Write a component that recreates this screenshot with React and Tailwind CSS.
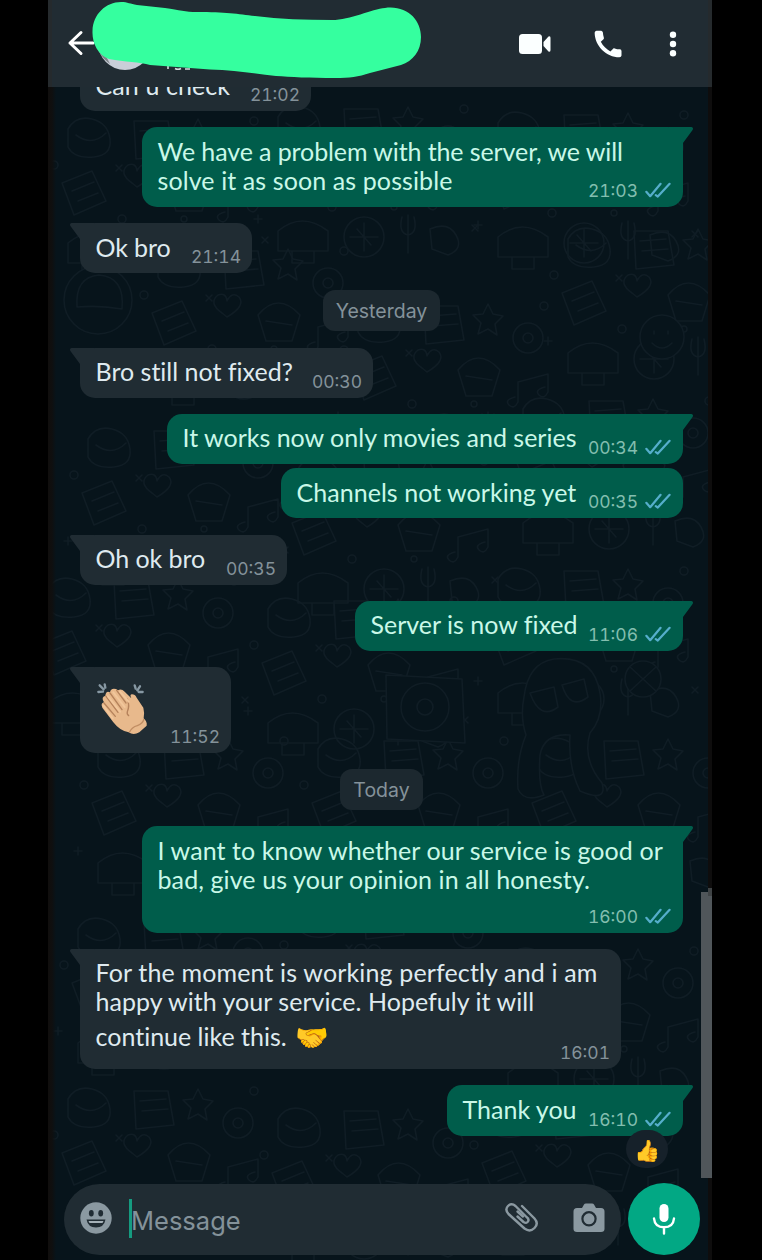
const RECEIVED = "bg-[#202c33] text-[#dfeaef]";
const SENT = "bg-[#005d4b] text-[#c9f8e8]";

function Ticks() {
  return (
    <svg className="relative -top-px ml-[7px] h-[17px] w-[26px]" viewBox="0 0 26 17" fill="none" stroke="#55aecb" strokeWidth="2.2" strokeLinecap="round" strokeLinejoin="round">
      <path d="M1.3 9.8 5.2 14.2 15.6 1.8" />
      <path d="M10.8 13.2 12.8 14.6 24.6 1.8" />
    </svg>
  );
}

function Tail({ sent }) {
  return sent ? (
    <svg className="absolute top-0 -right-[10px] h-[20px] w-[24px]" viewBox="0 0 24 20" fill="#005d4b">
      <path d="M0 0H22.5Q25 1 23.4 3.2L14 16V20H0Z" />
    </svg>
  ) : (
    <svg className="absolute top-0 -left-[10px] h-[20px] w-[24px]" viewBox="0 0 24 20" fill="#202c33">
      <path d="M24 0H1.5Q-1 1 .6 3.2L10 16V20H24Z" />
    </svg>
  );
}

function Bubble({ sent, tail = true, time, className, children }) {
  return (
    <div className={`relative grid shrink-0 rounded-[15px] ${sent ? `${SENT} self-end` : `${RECEIVED} self-start`} ${className}`}>
      {tail && <Tail sent={sent} />}
      <div className="relative col-start-1 row-start-1 pl-[15.5px] font-['Lato',sans-serif] text-[25px] leading-[29px] whitespace-nowrap [font-variant-ligatures:none]">
        {children}
      </div>
      <div className={`relative col-start-1 row-start-1 flex items-center self-end justify-self-end pb-[6px] font-['Inter',sans-serif] text-[17.5px] leading-[20px] tabular-nums ${sent ? "pr-[12px] text-[#83beaf]" : "pr-[11px] text-[#84929a]"}`}>
        {time}
        {sent && <Ticks />}
      </div>
    </div>
  );
}

function DayPill({ className, children }) {
  return (
    <div className={`flex h-[41px] shrink-0 items-center justify-center self-center rounded-[12px] bg-[#1c282f] pt-[3px] font-['Inter',sans-serif] text-[19.5px] text-[#84929a] ${className}`}>
      {children}
    </div>
  );
}

function ClapIcon() {
  return (
    <svg className="-ml-[6px] h-[65px] w-[70px]" viewBox="0 0 210 195">
      <g stroke="#8798a3" strokeWidth="7" strokeLinecap="round">
        <path d="M29 31 41 43M25 51 39 50M44 28 46 38M150 34 142 46M158 51 146 51M134 31 137 41" />
      </g>
      <path d="M84 46Q94 40 104 50L124 70Q118 58 126 58Q135 58 140 68L160 98Q164 112 161 130Q172 140 170 152L148 172Q130 182 116 172Q90 168 70 142L37 98Q31 85 42 82Q32 66 46 62Q48 46 60 52Q62 38 78 42Z" fill="#e8b98c" />
      <path d="M112 72Q120 92 112 110Q110 118 116 122M48 64 84 112M60 54 96 104M80 46 108 84M42 84 76 124" fill="none" stroke="#b5825b" strokeWidth="4" strokeLinecap="round" />
      <path d="M54 64 90 110M70 52 104 96M40 92 68 130M90 50 116 80" fill="none" stroke="#f1c69b" strokeWidth="6" strokeLinecap="round" />
      <path d="M118 172Q126 156 142 152Q158 146 162 132" fill="none" stroke="#c08d63" strokeWidth="4" />
    </svg>
  );
}

function Wallpaper() {
  const clusters = [
    [0, 20], [210, 8], [430, 14], [90, 150], [290, 205], [500, 130], [20, 330], [230, 360], [455, 300],
    [-20, 480], [200, 500], [430, 470], [30, 640], [250, 640], [470, 640], [10, 820], [230, 800], [440, 850], [0, 990], [210, 1010], [420, 1000],
  ];
  return (
    <svg className="absolute inset-0 h-[1173px] w-[664px]" viewBox="0 0 664 1173" fill="none" stroke="#101d25" strokeWidth="1.6" strokeLinecap="round" strokeLinejoin="round">
      <defs>
        <g id="doodles">
          <path d="M20 22q8-14 24-10t18 20-16 18q-20 2-26-10zM28 28q16 12 30-2" />
          <path d="M86 14h34l6 34-38 4zM92 24l26-2M94 34l26-2" />
          <path d="M150 12l5 10 10 2-8 8 2 11-9-6-10 5 3-11-8-8 10-1z" />
          <circle cx="190" cy="46" r="15" /><circle cx="190" cy="46" r="5" />
          <path d="M14 76l30-12 14 30-32 14zM24 84l22-9M30 94l20-8" />
          <path d="M84 76q-14-10-4-18 8-3 9 6 5-10 12-4 7 9-12 20z" />
          <path d="M120 78q20-24 42 0l-8 26h-26zM128 84l26 4" />
          <path d="M180 90l30-8v18q-4 8-9 3t6-8M180 90v20q-4 8-9 3t6-8" />
          <path d="M20 136q24-20 50 0v20H20zM34 156v12h22v-12" />
          <circle cx="106" cy="142" r="20" /><path d="M92 142h28M106 128v28M99 134l14 16" />
          <path d="M150 120v38M144 122q-4 16 6 18M156 122q4 16-6 18M172 134q18-8 26 6t-8 20l-16-6z" />
          <circle cx="74" cy="112" r="4" /><circle cx="6" cy="58" r="4" /><circle cx="136" cy="112" r="3" /><circle cx="206" cy="14" r="4" />
          <path d="M68 58l6 6M74 58l-6 6M214 130l6 6M220 130l-6 6M0 120v8M-4 124h8" />
        </g>
      </defs>
      {clusters.map(([x, y]) => (
        <use key={`${x}-${y}`} href="#doodles" x={x} y={y} />
      ))}
      <circle cx="50" cy="213" r="34" fill="#07141b" /><path d="M29 220q-2-30 22-32 26 2 23 34-22-4-45-2z" />
      <circle cx="614" cy="250" r="22" fill="#07141b" /><path d="M606 244v3M620 244v3M604 256q10 10 20 0" />
      <path d="M338 588l76 4 3 64-78-4z" fill="#07141b" /><circle cx="377" cy="620" r="24" /><circle cx="377" cy="620" r="8" />
      <path d="M476 610q4-34 30-38 40-4 46 34 4 24-10 40-8 26 12 50 6 20-22 8-12-24-10-56q-26-2-30 20 -2 30 4 40-20 8-26-6-2-30 8-54-6-18-2-38z" fill="#07141b" /><path d="M482 606l24-6 4 20q-18 14-28-14zM514 598l22-6 4 18q-18 14-26-12z" />
      <circle cx="595" cy="592" r="18" fill="#07141b" /><path d="M582 580l26 24M608 580l-26 24" />
    </svg>
  );
}

function Header() {
  return (
    <header className="relative z-10 flex h-[87px] shrink-0 items-center border-r-4 border-l-4 border-[#252a2d] bg-[#212c33]">
      <svg className="h-[87px] w-[377px] shrink-0" viewBox="52 0 377 87">
        <circle cx="125" cy="43" r="27" fill="#c9ced8" />
        <path d="M98 50q4 8 12 14l-4-8z" fill="#7e8488" />
        <path d="M168 62v7M175 68.500q3 1.500 6 0M185 69h5" stroke="#d5dbde" strokeWidth="1.600" fill="none" />
        <path d="M93 43H70M81 32.500 70 43l11 10.500" fill="none" stroke="#fff" strokeWidth="3" strokeLinecap="round" strokeLinejoin="round" />
        <path d="M92.500 31C93 14 106 2 121 2C128 2 130 4 137 5L165 8C180 10 185 12 197 12C225 12 238 14 255 16C280 19 305 20 332 20C350 20 372 9 385 8C407 5 421 20 421 37C421 51 413 61 401 65L370 73C358 77 350 78 335 78C310 78 290 77 276 76C256 74 235 70 210 69.500L150 65C140 62 125 62 109 59C98 55 92 43 92.500 31Z" fill="#35ff9f" />
      </svg>
      <div className="flex flex-1 items-center">
        <svg className="ml-[90px] h-[22px] w-[32px]" viewBox="0 0 32 22" fill="#fbffff">
          <rect x="0" y="1" width="23" height="20" rx="3.500" />
          <path d="M24.500 9 29.500 3.500Q31.500 2.500 31.500 5V17Q31.500 19.500 29.500 18.500L24.500 13Z" />
        </svg>
        <svg className="ml-[39px] h-[36px] w-[36px]" viewBox="0 0 24 24" fill="#fbffff">
          <path d="M20 15.500c-1.250 0-2.450-.2-3.570-.57-.35-.11-.74-.03-1.020.24l-1.800 1.800c-2.700-1.400-5-3.700-6.400-6.400l1.800-1.800c.27-.27.35-.67.24-1.020A11.400 11.400 0 0 1 8.600 4.400Q8.500 3.300 7.500 3.100H4.300Q3.100 3.300 3.100 4.500C3.200 13.300 10.800 20.800 19.600 20.900Q20.900 20.800 21 19.700V16.600Q20.900 15.600 20 15.500Z" />
        </svg>
        <svg className="ml-[40px] h-[26px] w-[14px]" viewBox="0 0 14 26" fill="#fbffff">
          <circle cx="7" cy="3.800" r="3.200" /><circle cx="7" cy="13" r="3.200" /><circle cx="7" cy="22.300" r="3.200" />
        </svg>
      </div>
    </header>
  );
}

function Composer() {
  return (
    <footer className="relative mt-[47px] ml-[16px] flex shrink-0 items-center gap-[7px]">
      <div className="flex h-[71px] w-[557px] items-center rounded-full bg-[#202c33] pb-[2px] pl-[16px]">
        <svg className="h-[32px] w-[32px]" viewBox="0 0 32 32">
          <circle cx="16" cy="16" r="15.700" fill="#8b99a1" />
          <ellipse cx="11.300" cy="11.300" rx="2.400" ry="3.200" fill="#202c33" /><ellipse cx="20.700" cy="11.300" rx="2.400" ry="3.200" fill="#202c33" />
          <path d="M6.500 17.500H25.500Q24 25.500 16 25.500T6.500 17.500Z" fill="#202c33" />
          <path d="M8.500 19H23.500L22.500 21H9.500Z" fill="#a5b1b8" />
        </svg>
        <div className="mt-px ml-[17px] h-[39px] w-[3px] bg-[#159b80]" />
        <span className="-ml-px pt-[5px] font-['Inter',sans-serif] text-[25.5px] leading-[30px] text-[#84929a]">Message</span>
        <svg className="ml-[263px] h-[34px] w-[36px] shrink-0" viewBox="0 0 36 34" fill="none" stroke="#8b99a1" strokeWidth="2.400" strokeLinecap="round" strokeLinejoin="round">
          <path d="M13.500 15.500 19.500 21Q22.500 23 24 20.500T22.500 16L11.500 5Q7.500 1.500 4 5T4.500 13L20.500 27.500Q26 31.500 30.500 27T30.500 17.500L18 5" />
          <path d="M19 15.500 13.500 10.500" />
        </svg>
        <svg className="ml-[33px] h-[30px] w-[32px] shrink-0" viewBox="0 0 32 30">
          <path d="M9 5 11 1.500Q11.500.5 13 .5H19Q20.500.5 21 1.500L23 5H28Q31.500 5 31.500 8.500V26Q31.500 29 28 29H4Q.5 29 .5 26V8.500Q.5 5 4 5Z" fill="#8b99a1" />
          <circle cx="16" cy="15.800" r="6.600" fill="none" stroke="#202c33" strokeWidth="2.200" />
        </svg>
      </div>
      <div className="flex size-[72px] items-center justify-center rounded-full bg-[#02a884]">
        <svg className="h-[32px] w-[24px]" viewBox="0 0 24 32" fill="none" stroke="#fff" strokeWidth="2.400" strokeLinecap="round">
          <rect x="7.500" y="1" width="9" height="18" rx="4.500" fill="#fff" stroke="none" />
          <path d="M2 15.500Q2.800 24.300 12 24.300T22 15.500M12 24.500V30.500" />
        </svg>
      </div>
    </footer>
  );
}

export default function App() {
  return (
    <div className="flex h-[1260px] w-[762px] overflow-hidden bg-black pl-[48px]">
      <div className="flex h-full w-[664px] flex-col">
        <Header />
        <main className="relative flex h-[1173px] flex-col overflow-hidden bg-[#07141b]">
          <Wallpaper />
          <div className="absolute inset-y-0 left-0 w-[8px] bg-linear-to-r from-[#100e0d] via-[#0f0f0f] to-transparent" />
          <div className="absolute inset-y-0 right-0 w-[4px] bg-[#0e0d0d]" />
          <div className="absolute top-[805px] right-0 h-[286px] w-[11px] bg-[#50565a]" />
          <div className="absolute top-[801px] right-0 h-[8px] w-[4px] bg-[#3f4345]" />

          <div className="relative flex flex-col pr-[29px] pl-[32px]">
            <Bubble tail={false} time="21:02" className="-mt-[26px] h-[50px] w-[231px] pt-[10px]">
              <span className="tracking-[0.1px]">Can u check</span>
            </Bubble>
            <Bubble sent time="21:03" className="mt-[16px] h-[80px] w-[541px] pt-[10px]">
              <div className="tracking-[-0.1px]">We have a problem with the server, we will</div>
              <div className="tracking-[0.1px]">solve it as soon as possible</div>
            </Bubble>
            <Bubble time="21:14" className="mt-[16px] h-[50px] w-[172px] pt-[10px]">
              <span className="tracking-[-0.1px]">Ok bro</span>
            </Bubble>

            <DayPill className="mt-[17px] w-[117px]">Yesterday</DayPill>

            <Bubble time="00:30" className="mt-[17px] h-[50px] w-[293px] pt-[9px]">Bro still not fixed?</Bubble>
            <Bubble sent time="00:34" className="mt-[16px] h-[50px] w-[516px] pt-[9px]">It works now only movies and series</Bubble>
            <Bubble sent tail={false} time="00:35" className="mt-[4px] h-[50px] w-[402px] pt-[10px]">
              <span className="tracking-[0.04px]">Channels not working yet</span>
            </Bubble>
            <Bubble time="00:35" className="mt-[17px] h-[50px] w-[207px] pt-[9px]">
              <span className="tracking-[-0.05px]">Oh ok bro</span>
            </Bubble>
            <Bubble sent time="11:06" className="mt-[16px] h-[50px] w-[328px] pt-[9px]">Server is now fixed</Bubble>
            <Bubble time="11:52" className="mt-[16px] h-[86px] w-[151px] pt-[8px]"><ClapIcon /></Bubble>

            <DayPill className="mt-[16px] w-[83px]">Today</DayPill>

            <Bubble sent time="16:00" className="mt-[16px] h-[107px] w-[541px] pt-[10px]">
              <div className="tracking-[0.09px]">I want to know whether our service is good or</div>
              <div className="tracking-[0.1px]">bad, give us your opinion in all honesty.</div>
            </Bubble>
            <Bubble time="16:01" className="mt-[16px] h-[120px] w-[541px] pt-[9px]">
              <div className="tracking-[0.15px]">For the moment is working perfectly and i am</div>
              <div className="tracking-[0.04px]">happy with your service. Hopefuly it will</div>
              <div className="flex h-[41px] items-center">
                <span>continue like this.</span>
                <span className="ml-[8px] text-[27px]">🤝</span>
              </div>
            </Bubble>
            <Bubble sent time="16:10" className="mt-[16px] h-[51px] w-[236px] pt-[10px]">
              Thank you
              <div className="absolute top-[35px] left-[179px] flex h-[38px] w-[42px] items-center justify-center rounded-full bg-[#16212a] text-[21px] leading-none">👍</div>
            </Bubble>
          </div>

          <Composer />
        </main>
      </div>
    </div>
  );
}
